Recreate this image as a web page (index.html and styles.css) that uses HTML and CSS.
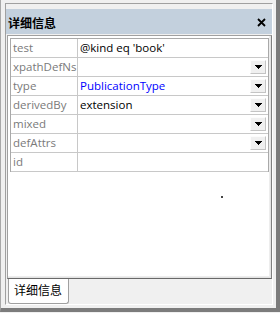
FILE: index.html
```html
<!DOCTYPE html>
<html>
<head>
<meta charset="utf-8">
<link rel="stylesheet" href="styles.css">
</head>
<body>
<div class="window">
  <div class="inner">
    <div class="title">
      <span class="title-text">详细信息</span>
      <svg class="close" width="9" height="9" viewBox="0 0 9 9"><path d="M1 1L8 8M8 1L1 8" stroke="#000" stroke-width="1.8" fill="none"/></svg>
    </div>
    <div class="panel">
      <div class="grid">
        <div class="row"><div class="key">test</div><div class="val"><span>@kind eq 'book'</span></div></div>
        <div class="row"><div class="key">xpathDefNs</div><div class="val"><span></span><span class="btn"><svg width="7" height="4" viewBox="0 0 7 4"><path d="M0 0h7v1h-1v1h-1v1h-1v1h-1v-1h-1v-1h-1v-1h-1z" fill="#000"/></svg></span></div></div>
        <div class="row"><div class="key">type</div><div class="val blue"><span>PublicationType</span><span class="btn"><svg width="7" height="4" viewBox="0 0 7 4"><path d="M0 0h7v1h-1v1h-1v1h-1v1h-1v-1h-1v-1h-1v-1h-1z" fill="#000"/></svg></span></div></div>
        <div class="row"><div class="key">derivedBy</div><div class="val"><span>extension</span><span class="btn"><svg width="7" height="4" viewBox="0 0 7 4"><path d="M0 0h7v1h-1v1h-1v1h-1v1h-1v-1h-1v-1h-1v-1h-1z" fill="#000"/></svg></span></div></div>
        <div class="row"><div class="key">mixed</div><div class="val"><span></span><span class="btn"><svg width="7" height="4" viewBox="0 0 7 4"><path d="M0 0h7v1h-1v1h-1v1h-1v1h-1v-1h-1v-1h-1v-1h-1z" fill="#000"/></svg></span></div></div>
        <div class="row"><div class="key">defAttrs</div><div class="val"><span></span><span class="btn"><svg width="7" height="4" viewBox="0 0 7 4"><path d="M0 0h7v1h-1v1h-1v1h-1v1h-1v-1h-1v-1h-1v-1h-1z" fill="#000"/></svg></span></div></div>
        <div class="row"><div class="key">id</div><div class="val"></div></div>
      </div>
      <div class="dot"></div>
    </div>
    <div class="tabbar">
      <div class="tab">详细信息</div>
    </div>
  </div>
</div>
</body>
</html>
```
FILE: styles.css
```css
html, body { margin: 0; padding: 0; }
body { width: 280px; height: 313px; overflow: hidden; background: #f0f0f0; }
.window {
  box-sizing: border-box;
  width: 280px; height: 312px;
  border-left: 1px solid #a8a8a8;
  border-right: 4px solid #7c7c7c;
  border-bottom: 4px solid #7c7c7c;
  background: #f0f0f0;
  padding: 3px 3px 3px 4px;
}
.inner {
  box-sizing: border-box;
  height: 100%;
  border-left: 1px solid #a0a0a0;
  border-top: 1px solid #a0a0a0;
  border-right: 1px solid #ffffff;
  border-bottom: 1px solid #ffffff;
  display: flex; flex-direction: column;
  padding-top: 5px;
}
.title {
  height: 25px;
  background: #c3d0dd;
  display: flex; align-items: center; justify-content: space-between;
  padding: 0 6px 0 2px;
  font-family: "Noto Sans CJK SC", sans-serif;
  font-weight: bold; font-size: 12px; color: #000;
  flex: none;
}
.title-text { position: relative; top: 1px; }
.close { display: block; position: relative; top: 1px; }
.panel {
  position: relative;
  height: 244px;
  box-sizing: border-box;
  flex: none;
  margin: 1px 0 0 1px;
  background: #fff;
  border-left: 1px solid #a0a0a0;
  border-top: 1px solid #a0a0a0;
  border-right: 1px solid #808080;
  border-bottom: 1px solid #696969;
  box-shadow: inset -1px -1px 0 #e3e3e3, inset -2px -2px 0 #ededed;
  padding: 2px 2px 0 2px;
}
.grid {
  border: 1px solid #a9a9a9;
  border-bottom: none;
  font-family: "Open Sans", sans-serif;
  font-size: 11.5px;
}
.row {
  display: grid;
  grid-template-columns: 67px 1fr;
  height: 19px;
  border-bottom: 1px solid #c8c8c8;
  box-sizing: border-box;
}
.key {
  color: #7a7a7a;
  border-right: 1px solid #c8c8c8;
  padding-left: 2px;
  line-height: 18px;
  white-space: nowrap;
  overflow: hidden;
}
.val {
  color: #000;
  padding-left: 2px;
  line-height: 18px;
  display: flex; justify-content: space-between; align-items: center;
  white-space: nowrap;
}
.val.blue { color: #0000ff; }
.btn {
  box-sizing: border-box;
  width: 16px; height: 14px;
  background: #f0f0f0;
  border-top: 1px solid #fcfcfc; border-left: 1px solid #fcfcfc;
  border-right: 1px solid #c4c4c4; border-bottom: 1px solid #c4c4c4;
  margin-right: 2px;
  display: flex; align-items: center; justify-content: center;
}
.btn svg { display: block; }
.dot { position: absolute; left: 213px; top: 160px; width: 2px; height: 2px; background: #444; }
.tabbar {
  height: 25px; flex: none;
  padding-left: 2px;
}
.tab {
  box-sizing: border-box;
  width: 61px; height: 26px;
  margin-top: -1px;
  background: #fff;
  border: 1px solid #a0a0a0; border-top: none;
  border-radius: 0 0 3px 3px;
  font-family: "Noto Sans CJK SC", sans-serif; font-size: 12px; color: #000;
  line-height: 24px; padding-left: 5px;
}
```
